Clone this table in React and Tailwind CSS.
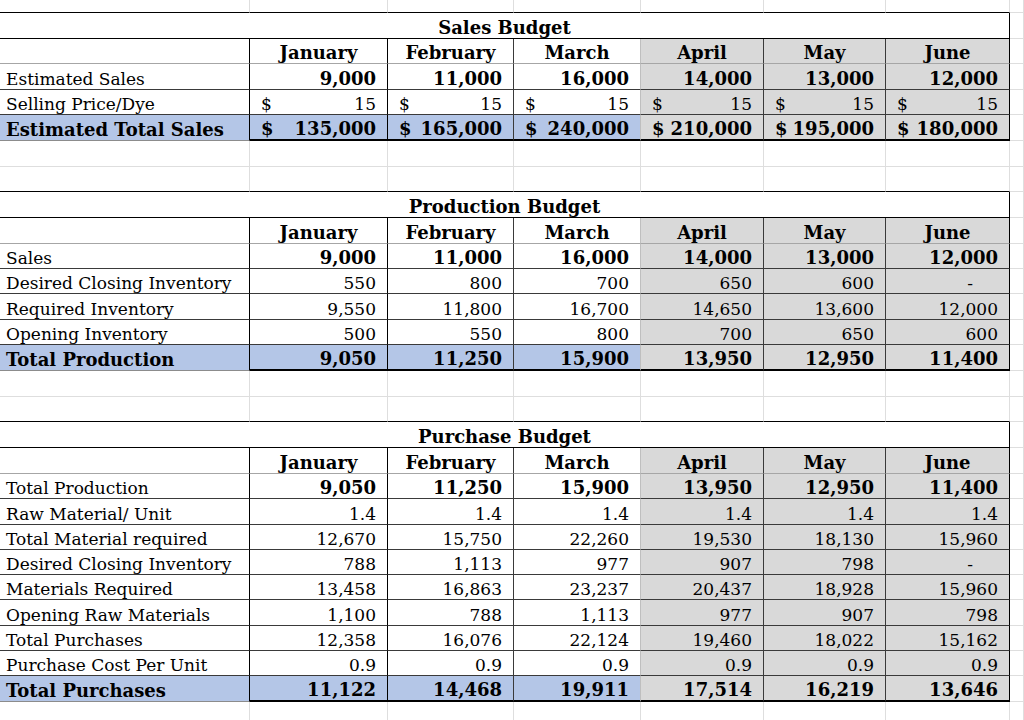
// Budget workbook — Sales, Production and Purchase budgets, January to June.

const GRID = 'grid grid-cols-[250px_138px_126px_127px_123px_122px_124px_14px]'

const MONTHS = [
  { name: 'January', edge: 'border-r-black', shade: false },
  { name: 'February', edge: 'border-r-[#3a3a3a]', shade: false },
  { name: 'March', edge: 'border-r-[#bfbfbf]', shade: false },
  { name: 'April', edge: 'border-r-[#3a3a3a]', shade: true },
  { name: 'May', edge: 'border-r-[#3a3a3a]', shade: true },
  { name: 'June', edge: 'border-r-black', shade: true },
]

const SALES = [
  { label: 'Estimated Sales', bold: true, values: ['9,000', '11,000', '16,000', '14,000', '13,000', '12,000'] },
  { label: 'Selling Price/Dye', dollar: true, values: ['15', '15', '15', '15', '15', '15'] },
  { label: 'Estimated Total Sales', total: true, dollar: true, values: ['135,000', '165,000', '240,000', '210,000', '195,000', '180,000'] },
]

const PRODUCTION = [
  { label: 'Sales', bold: true, values: ['9,000', '11,000', '16,000', '14,000', '13,000', '12,000'] },
  { label: 'Desired Closing Inventory', values: ['550', '800', '700', '650', '600', '-'] },
  { label: 'Required Inventory', values: ['9,550', '11,800', '16,700', '14,650', '13,600', '12,000'] },
  { label: 'Opening Inventory', values: ['500', '550', '800', '700', '650', '600'] },
  { label: 'Total Production', total: true, values: ['9,050', '11,250', '15,900', '13,950', '12,950', '11,400'] },
]

const PURCHASE = [
  { label: 'Total Production', bold: true, values: ['9,050', '11,250', '15,900', '13,950', '12,950', '11,400'] },
  { label: 'Raw Material/ Unit', values: ['1.4', '1.4', '1.4', '1.4', '1.4', '1.4'] },
  { label: 'Total Material required', values: ['12,670', '15,750', '22,260', '19,530', '18,130', '15,960'] },
  { label: 'Desired Closing Inventory', values: ['788', '1,113', '977', '907', '798', '-'] },
  { label: 'Materials Required', values: ['13,458', '16,863', '23,237', '20,437', '18,928', '15,960'] },
  { label: 'Opening Raw Materials', values: ['1,100', '788', '1,113', '977', '907', '798'] },
  { label: 'Total Purchases', values: ['12,358', '16,076', '22,124', '19,460', '18,022', '15,162'] },
  { label: 'Purchase Cost Per Unit', values: ['0.9', '0.9', '0.9', '0.9', '0.9', '0.9'] },
  { label: 'Total Purchases', total: true, values: ['11,122', '14,468', '19,911', '17,514', '16,219', '13,646'] },
]

// Bold text runs a little larger so its width matches the sheet's bold face
const BOLD = 'font-bold text-[18px]'

/** Empty spreadsheet row; `closing` draws the black top edge of the next table. */
function GapRow({ h, closing }) {
  return (
    <div className={`${GRID} ${h}`}>
      {MONTHS.concat([{}]).map((_, i) => (
        <div
          key={i}
          className={`border-r border-b border-r-[#dedede] ${closing ? 'border-b-black' : 'border-b-[#dedede]'}`}
        />
      ))}
      <div className="border-r border-b border-[#dedede]" />
    </div>
  )
}

function Cell({ row, month, value }) {
  const bg = row.total && !month.shade ? 'bg-[#b4c6e7]' : month.shade ? 'bg-[#d9d9d9]' : 'bg-white'
  const bottom = row.total ? 'border-b-2 border-b-black' : 'border-b border-b-[#3a3a3a]'
  const weight = row.bold || row.total ? BOLD : ''
  const align = row.dollar ? 'justify-between pl-[11px] pr-[11px]' : value === '-' ? 'justify-end pr-[36px]' : 'justify-end pr-[11px]'
  return (
    <div className={`flex items-end border-r ${bottom} ${month.edge} ${bg} ${weight} ${align}`}>
      {row.dollar && <span>$</span>}
      <span>{value}</span>
    </div>
  )
}

function Budget({ title, rows, heights }) {
  return (
    <>
      <div className={`${GRID} h-[26px]`}>
        <div className={`col-span-7 flex items-end justify-center border-r border-b border-black ${BOLD}`}>
          {title}
        </div>
        <div className="border-r border-b border-[#dedede]" />
      </div>

      <div className={`${GRID} ${heights[0]}`}>
        <div className="border-r border-b border-r-black border-b-[#a6a6a6] bg-white" />
        {MONTHS.map((m) => (
          <div
            key={m.name}
            className={`flex items-end justify-center border-r border-b border-b-[#a6a6a6] ${BOLD} ${m.edge} ${m.shade ? 'bg-[#d9d9d9]' : 'bg-white'}`}
          >
            {m.name}
          </div>
        ))}
        <div className="border-r border-b border-[#dedede]" />
      </div>

      {rows.map((row, r) => (
        <div key={row.label + r} className={`${GRID} ${heights[r + 1]}`}>
          <div
            className={`flex items-end border-r border-b border-r-black pl-[6px] ${
              row.total ? `bg-[#b4c6e7] ${BOLD} border-b-[#8c8c8c]` : 'bg-white border-b-[#3a3a3a]'
            }`}
          >
            {row.label}
          </div>
          {MONTHS.map((m, i) => (
            <Cell key={m.name} row={row} month={m} value={row.values[i]} />
          ))}
          <div className="border-r border-b border-[#dedede]" />
        </div>
      ))}
    </>
  )
}

export default function App() {
  return (
    <div className="h-[720px] w-[1024px] overflow-hidden bg-white font-['DejaVu_Serif',serif] text-[17px] leading-[20px] text-black">
      <GapRow h="h-[13px]" closing />
      <Budget
        title="Sales Budget"
        rows={SALES}
        heights={['h-[25px]', 'h-[26px]', 'h-[25px]', 'h-[26px]']}
      />
      <GapRow h="h-[26px]" />
      <GapRow h="h-[25px]" closing />
      <Budget
        title="Production Budget"
        rows={PRODUCTION}
        heights={['h-[26px]', 'h-[25px]', 'h-[25px]', 'h-[26px]', 'h-[25px]', 'h-[26px]']}
      />
      <GapRow h="h-[26px]" />
      <GapRow h="h-[25px]" closing />
      <Budget
        title="Purchase Budget"
        rows={PURCHASE}
        heights={[
          'h-[26px]', 'h-[25px]', 'h-[26px]', 'h-[25px]', 'h-[25px]',
          'h-[25px]', 'h-[26px]', 'h-[25px]', 'h-[25px]', 'h-[26px]',
        ]}
      />
      <GapRow h="h-[26px]" />
    </div>
  )
}
